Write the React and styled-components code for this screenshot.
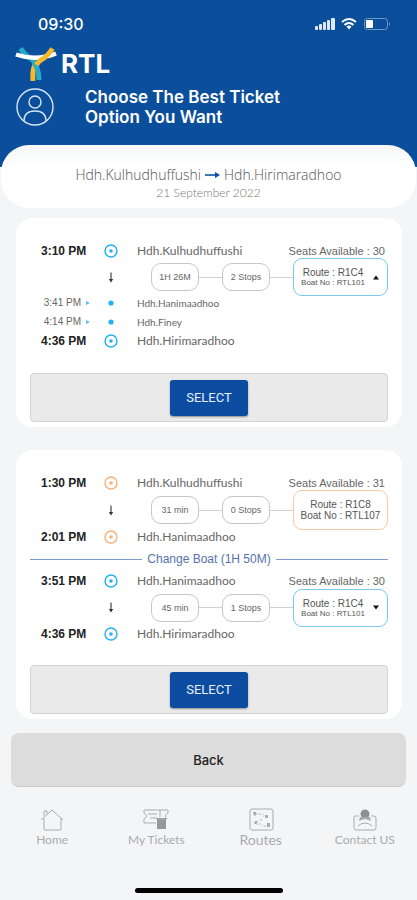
import React from "react";
import styled, { createGlobalStyle } from "styled-components";

const GlobalStyle = createGlobalStyle`
  *, *::before, *::after { box-sizing: border-box; }
  body { margin: 0; background: #f4f5f7; font-family: Lato, "Liberation Sans", sans-serif; }
  button { font: inherit; cursor: pointer; }
  h1, p { margin: 0; }
`;

const blue = "#0b4f9c";
const cyan = "#22b1f2";
const orange = "#f7b27a";

const Screen = styled.div`
  min-height: 100vh;
  display: flex;
  flex-direction: column;
  background: linear-gradient(${blue} 167px, #f4f5f7 167px);
`;

const StatusBar = styled.div`
  display: flex;
  align-items: center;
  justify-content: space-between;
  height: 48px;
  padding: 0 25px 0 38px;
  color: #fff;
`;

const Clock = styled.time`
  font: 500 16px/20px Inter, sans-serif;
`;

const StatusIcons = styled.svg`
  width: 77px;
  height: 14px;
`;

const Header = styled.header`
  color: #fff;
  height: 97px;
  padding: 0 15px;
`;

const Brand = styled.div`
  display: flex;
  align-items: center;
  gap: 4px;
  height: 32px;
`;

const BrandName = styled.span`
  font: 700 26px/32px Inter, sans-serif;
`;

const TitleRow = styled.div`
  display: flex;
  align-items: center;
  gap: 30px;
  padding-top: 7px;
`;

const ProfileButton = styled.button`
  display: flex;
  padding: 0;
  border: 0;
  background: none;
  color: #d8e4f4;
`;

const Title = styled.h1`
  font: 600 17px/20px Inter, sans-serif;
`;

const Journey = styled.section`
  margin: 0 1px;
  height: 63px;
  padding-top: 19px;
  border-radius: 28px;
  background: linear-gradient(#f5f6f8, #fff 20px);
  text-align: center;
`;

const JourneyRoute = styled.p`
  display: flex;
  align-items: center;
  justify-content: center;
  gap: 4px;
  font: 300 14px/22px "Open Sans", sans-serif;
  color: #555;
`;

const JourneyDate = styled.p`
  font: 300 12px/14px Lato, sans-serif;
  color: #777;
`;

const Main = styled.main`
  display: flex;
  flex-direction: column;
  gap: 23px;
  padding: 10px 15px 0 16px;
`;

const Card = styled.article`
  padding: 23px 14px 5px;
  border-radius: 16px;
  background: #fff;
`;

const Row = styled.div`
  display: grid;
  grid-template-columns: 51px 14px 32px 10px 1fr;
  grid-template-rows: 100%;
  align-items: center;
  height: ${(p) => (p.$small ? "19px" : "20px")};
  color: #555;
`;

const Time = styled.time`
  grid-column: 1 / 3;
  padding-left: 11px;
  font: 700 12px/20px "Liberation Sans", sans-serif;
  color: #222;
`;

const SmallTime = styled.time`
  text-align: right;
  white-space: nowrap;
  font: 400 10px/18px "Liberation Sans", sans-serif;
  color: #666;
`;

const Centered = styled.span`
  grid-column: ${(p) => p.$col};
  display: flex;
  justify-content: center;
`;

const Place = styled.div`
  grid-column: 5;
  display: flex;
  justify-content: space-between;
  padding-right: 3px;
  font: 400 ${(p) => (p.$small ? "10px" : "12px")}/18px Lato, sans-serif;
  white-space: nowrap;
  color: #666;
`;

const Seats = styled.span`
  font: 400 11px/18px "Liberation Sans", sans-serif;
`;

const DetailRow = styled(Row)`
  height: ${(p) => p.$height}px;
`;

const Details = styled.div`
  grid-column: 5;
  display: flex;
  align-items: center;
  padding-left: 14px;
`;

const Pill = styled.span`
  width: 48px;
  height: 28px;
  border: 1px solid #c6c6c6;
  border-radius: 10px;
  font: 400 9px/26px "Liberation Sans", sans-serif;
  text-align: center;
  color: #666;
`;

const Link = styled.span`
  flex: 1;
  height: 1px;
  background: #d2d2d2;
`;

const boxStyle = (p) => `
  display: flex;
  align-items: center;
  justify-content: center;
  gap: 7px;
  width: 95px;
  height: ${p.$tall ? 40 : 38}px;
  padding: 0;
  border: 1px solid ${p.$color};
  border-radius: 9px;
  background: #fff;
  color: #555;
  font-family: "Liberation Sans", sans-serif;
  text-align: center;
`;

const RouteBox = styled.div`${boxStyle}`;
const RouteToggle = styled.button`${boxStyle}`;

const RouteText = styled.span`
  display: flex;
  flex-direction: column;
  font-size: 10px;
  line-height: 11px;
`;

const BoatText = styled.span`
  font-size: ${(p) => (p.$small ? "8px" : "10px")};
  line-height: ${(p) => (p.$small ? "9px" : "11px")};
`;

const Change = styled.div`
  display: flex;
  align-items: center;
  gap: 5px;
  height: 24px;
  font: 400 12px/18px "Liberation Sans", sans-serif;
  color: #5571ad;
  &::before, &::after {
    content: "";
    flex: 1;
    height: 1px;
    background: #7d9bc9;
  }
`;

const SelectBar = styled.div`
  display: flex;
  align-items: center;
  justify-content: center;
  height: 49px;
  margin-top: ${(p) => p.$gap}px;
  border: 1px solid #d3d3d3;
  border-radius: 4px;
  background: #eaeaea;
`;

const SelectButton = styled.button`
  width: 78px;
  height: 36px;
  padding: 0;
  border: 0;
  border-radius: 3px;
  background: #0c4da2;
  box-shadow: 0 1px 2px rgba(0, 0, 0, 0.4);
  color: #e9effa;
  font: 400 13px/36px Roboto, sans-serif;
`;

const BackButton = styled.button`
  margin: 14px 11px 0;
  height: 54px;
  border: 0;
  border-bottom: 1px solid #c9cacb;
  border-radius: 8px;
  background: #dcdcdc;
  color: #222;
  font: 500 13px/20px Inter, sans-serif;
`;

const Nav = styled.nav`
  display: grid;
  grid-template-columns: repeat(4, 1fr);
  padding: 21px 0 0;
`;

const NavLink = styled.a`
  display: flex;
  flex-direction: column;
  align-items: center;
  color: #a9abad;
  text-decoration: none;
  font: 400 ${(p) => (p.$large ? "14px" : "12px")}/16px Lato, sans-serif;
`;

const HomeBar = styled.div`
  width: 148px;
  height: 5px;
  margin: auto auto 7px;
  border-radius: 3px;
  background: #000;
`;

const Logo = () => (
  <svg width="42" height="34" viewBox="0 0 42 34" fill="none" aria-hidden="true">
    <path d="M5.5 1.5Q10 8 15 11.5" stroke="#2aa9c4" strokeWidth="5" />
    <path d="M21 16Q17 22 18 34" stroke="#f5b92c" strokeWidth="5" />
    <path d="M15 10Q24 19 24 33" stroke="#2aa9c4" strokeWidth="5" />
    <path d="M1 7.5Q21 14.5 41 6.5" stroke="#fff" strokeWidth="4.5" />
    <path d="M37.5 1.5Q32 10 26 13Q23 15 21.5 18" stroke="#f5b92c" strokeWidth="5" />
  </svg>
);

const Profile = () => (
  <svg width="40" height="38" viewBox="0 0 40 38" fill="none" stroke="currentColor" strokeWidth="1.4" aria-hidden="true">
    <circle cx="20" cy="19" r="18" />
    <circle cx="20" cy="14" r="6" />
    <path d="M9 33Q9 23 20 23T31 33" />
  </svg>
);

const Marker = ({ color }) => (
  <svg width="14" height="14" viewBox="0 0 14 14" fill="none" aria-hidden="true">
    <circle cx="7" cy="7" r="6" stroke={color} strokeWidth="1.4" />
    <circle cx="7" cy="7" r="1.8" fill={color} />
  </svg>
);

const DownArrow = () => (
  <svg width="6" height="11" viewBox="0 0 6 11" aria-hidden="true">
    <path d="M3 0.5V8" stroke="#333" strokeWidth="1.1" />
    <path d="M0.8 7H5.2L3 10.5Z" fill="#333" />
  </svg>
);

const Endpoint = ({ time, place, color, seats }) => (
  <Row>
    <Time>{time}</Time>
    <Centered $col={3}><Marker color={color} /></Centered>
    <Place>
      <span>{place}</span>
      {seats && <Seats>Seats Available : {seats}</Seats>}
    </Place>
  </Row>
);

const Stop = ({ time, place }) => (
  <Row $small>
    <SmallTime>{time}</SmallTime>
    <Centered $col={2}>
      <svg width="6" height="6" viewBox="0 0 6 6" aria-hidden="true"><path d="M1 1L5 3L1 5Z" fill="#5ac3ee" /></svg>
    </Centered>
    <Centered $col={3}>
      <svg width="6" height="6" viewBox="0 0 6 6" aria-hidden="true"><circle cx="3" cy="3" r="2.6" fill={cyan} /></svg>
    </Centered>
    <Place $small>{place}</Place>
  </Row>
);

const Detail = ({ duration, stops, route, boat, toggle, height }) => {
  const text = (
    <RouteText>
      Route : {route}
      <BoatText $small={!!toggle}>Boat No : {boat}</BoatText>
    </RouteText>
  );
  return (
    <DetailRow $height={height}>
      <Centered $col={3}><DownArrow /></Centered>
      <Details>
        <Pill>{duration}</Pill>
        <Link />
        <Pill>{stops}</Pill>
        <Link />
        {toggle ? (
          <RouteToggle type="button" $color="#79c9f3" aria-expanded={toggle === "up"}>
            {text}
            <svg width="8" height="5" viewBox="0 0 8 5" aria-hidden="true">
              <path d={toggle === "up" ? "M1 4.5L4 0.5L7 4.5Z" : "M1 0.5L4 4.5L7 0.5Z"} fill="#111" />
            </svg>
          </RouteToggle>
        ) : (
          <RouteBox $color="#f8c9a1" $tall>{text}</RouteBox>
        )}
      </Details>
    </DetailRow>
  );
};

const iconProps = { width: 26, height: 24, viewBox: "0 0 26 24", fill: "none", stroke: "currentColor", "aria-hidden": true };

const HomeIcon = () => (
  <svg {...iconProps}>
    <path d="M2 12L13 2L24 12M5 10V21Q5 22 6 22H21Q22 22 22 21V10M5 8V3H8V6" />
  </svg>
);

const TicketIcon = () => (
  <svg {...iconProps}>
    <path d="M1 2H25V5L22 8L24 11M1 2V5L4 8L1 11V15H13M5 6H14M7 10H14M17 2V9" />
    <rect x="14" y="10" width="9" height="11" fill="#96989a" stroke="none" />
    <path d="M13 11H24" />
  </svg>
);

const RoutesIcon = () => (
  <svg {...iconProps}>
    <rect x="2" y="1" width="23" height="21" rx="2" />
    <path d="M8 6H15M19 8H15M8 16H13M18 18H14M12 12H15" strokeWidth="0.8" strokeDasharray="2 1" />
    <path d="M5 4H8V7L6 8ZM17 7H20V10H17ZM7 13H10L8 16H6ZM19 15H22V19H19Z" fill="currentColor" stroke="none" />
  </svg>
);

const ContactIcon = () => (
  <svg {...iconProps}>
    <path d="M7 8H3Q2 8 2 10V20Q2 22 4 22H22Q24 22 24 20V10Q24 8 22 8H19M6 18Q9 15 13 15T20 18" />
    <circle cx="13" cy="6" r="4.5" fill="#8d8f91" stroke="none" />
    <path d="M8 9L7 13L13 11L19 13L18 9Z" fill="#a9abad" stroke="none" />
  </svg>
);

const navItems = [
  { label: "Home", Icon: HomeIcon },
  { label: "My Tickets", Icon: TicketIcon },
  { label: "Routes", Icon: RoutesIcon, large: true },
  { label: "Contact US", Icon: ContactIcon },
];

export default function App() {
  return (
    <Screen>
      <GlobalStyle />
      <StatusBar>
        <Clock>09:30</Clock>
        <StatusIcons viewBox="0 0 77 14" aria-label="Signal, wifi and battery">
          <g fill="#dfe8f5">
            <rect x="0" y="9" width="3" height="4" rx="1" />
            <rect x="4" y="7" width="3" height="6" rx="1" />
            <rect x="8" y="5" width="3" height="8" rx="1" />
            <rect x="12" y="3" width="3" height="10" rx="1" />
            <rect x="16" y="1" width="4" height="12" rx="1" />
          </g>
          <g fill="none" stroke="#fff" strokeWidth="2">
            <path d="M27 5Q34 -1 41 5M29.5 8Q34 4 38.5 8" />
            <path d="M31.5 9.5Q34 7.5 36.5 9.5L34 12.5Z" fill="#fff" stroke="none" />
          </g>
          <rect x="49.5" y="1.5" width="23" height="11" rx="3" fill="none" stroke="#6f98ca" />
          <path d="M74 5Q76 7 74 9Z" fill="#6f98ca" />
          <rect x="51" y="3" width="7" height="8" rx="1" fill="#fff" />
        </StatusIcons>
      </StatusBar>
      <Header>
        <Brand>
          <Logo />
          <BrandName>RTL</BrandName>
        </Brand>
        <TitleRow>
          <ProfileButton type="button" aria-label="Profile"><Profile /></ProfileButton>
          <Title>Choose The Best Ticket<br />Option You Want</Title>
        </TitleRow>
      </Header>
      <Journey>
        <JourneyRoute>
          <span>Hdh.Kulhudhuffushi</span>
          <svg width="15" height="8" viewBox="0 0 15 8" aria-label="to">
            <path d="M0 4H12" stroke={blue} strokeWidth="1.6" />
            <path d="M10 1L15 4L10 7Z" fill={blue} />
          </svg>
          <span>Hdh.Hirimaradhoo</span>
        </JourneyRoute>
        <JourneyDate>21 September 2022</JourneyDate>
      </Journey>
      <Main>
        <Card>
          <Endpoint time="3:10 PM" place="Hdh.Kulhudhuffushi" color={cyan} seats="30" />
          <Detail height={32} duration="1H 26M" stops="2 Stops" route="R1C4" boat="RTL101" toggle="up" />
          <Stop time="3:41 PM" place="Hdh.Hanimaadhoo" />
          <Stop time="4:14 PM" place="Hdh.Finey" />
          <Endpoint time="4:36 PM" place="Hdh.Hirimaradhoo" color={cyan} />
          <SelectBar $gap={22}><SelectButton type="button">SELECT</SelectButton></SelectBar>
        </Card>
        <Card>
          <Endpoint time="1:30 PM" place="Hdh.Kulhudhuffushi" color={orange} seats="31" />
          <Detail height={34} duration="31 min" stops="0 Stops" route="R1C8" boat="RTL107" />
          <Endpoint time="2:01 PM" place="Hdh.Hanimaadhoo" color={orange} />
          <Change>Change Boat (1H 50M)</Change>
          <Endpoint time="3:51 PM" place="Hdh.Hanimaadhoo" color={cyan} seats="30" />
          <Detail height={33} duration="45 min" stops="1 Stops" route="R1C4" boat="RTL101" toggle="down" />
          <Endpoint time="4:36 PM" place="Hdh.Hirimaradhoo" color={cyan} />
          <SelectBar $gap={21}><SelectButton type="button">SELECT</SelectButton></SelectBar>
        </Card>
      </Main>
      <BackButton type="button">Back</BackButton>
      <Nav aria-label="Main">
        {navItems.map(({ label, Icon, large }) => (
          <NavLink key={label} href="#" $large={large}>
            <Icon />
            <span>{label}</span>
          </NavLink>
        ))}
      </Nav>
      <HomeBar />
    </Screen>
  );
}
